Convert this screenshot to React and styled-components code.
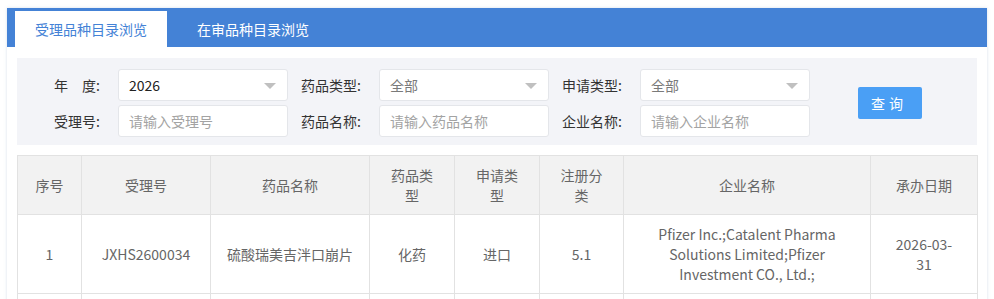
import React from "react";
import styled, { createGlobalStyle } from "styled-components";

const GlobalStyle = createGlobalStyle`
  body {
    margin: 0;
    background: #fff;
    font-family: "Microsoft YaHei", "Noto Sans CJK SC", sans-serif;
    font-size: 14px;
    color: #333;
  }
`;

const Page = styled.div`
  padding: 8px 7px;
`;

const Card = styled.div`
  width: 980px;
  background: #fff;
  box-shadow: 0 0 3px rgba(150, 170, 200, 0.35);
`;

const TabBar = styled.div`
  display: flex;
  align-items: flex-end;
  gap: 10px;
  height: 39px;
  padding-left: 8px;
  background: #4482d6;
`;

const Tab = styled.div`
  height: 36px;
  padding: 0 20px;
  display: flex;
  align-items: center;
  font-size: 14px;
  color: ${({ active }) => (active ? "#4482d6" : "#fff")};
  background: ${({ active }) => (active ? "#fff" : "transparent")};
  cursor: pointer;
`;

const Body = styled.div`
  padding: 11px 10px 0;
`;

const Filter = styled.div`
  display: flex;
  align-items: center;
  padding: 11px 10px 8px;
  background: #f3f4f8;
`;

const Fields = styled.div`
  display: grid;
  grid-template-columns: repeat(3, 91px 170px);
  row-gap: 4px;
`;

const Label = styled.label`
  display: flex;
  align-items: center;
  justify-content: flex-end;
  padding-right: 18px;
  color: #333;
  white-space: pre;
`;

const Input = styled.input`
  box-sizing: border-box;
  width: 170px;
  height: 32px;
  padding: 0 10px;
  border: 1px solid #e4e6ea;
  border-radius: 3px;
  background: #fff;
  font: inherit;
  color: #333;
  outline: none;

  &::placeholder {
    color: #a3a3a3;
  }
`;

const Select = styled.div`
  box-sizing: border-box;
  position: relative;
  width: 170px;
  height: 32px;
  padding: 0 10px;
  display: flex;
  align-items: center;
  border: 1px solid #e4e6ea;
  border-radius: 3px;
  background: #fff;
  color: ${({ muted }) => (muted ? "#7a7a7a" : "#222")};

  &::after {
    content: "";
    position: absolute;
    right: 11px;
    top: 13px;
    border-left: 6px solid transparent;
    border-right: 6px solid transparent;
    border-top: 6px solid #c0c0c0;
  }
`;

const Button = styled.button`
  margin-left: 48px;
  width: 64px;
  height: 32px;
  border: none;
  border-radius: 2px;
  background: #4a9ff5;
  color: #fff;
  font: inherit;
  font-size: 14px;
  letter-spacing: 4px;
  padding-left: 4px;
  cursor: pointer;
`;

const Table = styled.table`
  margin-top: 10px;
  width: 960px;
  border-collapse: collapse;
  table-layout: fixed;
  color: #666;
`;

const Th = styled.th`
  height: 59px;
  padding: 9px 15px;
  box-sizing: border-box;
  background: #f2f2f2;
  border: 1px solid #e2e2e2;
  font-weight: normal;
  line-height: 20px;
  text-align: center;
`;

const Td = styled.td`
  height: 79px;
  padding: 9px ${({ wide }) => (wide ? "20px" : "15px")};
  box-sizing: border-box;
  border: 1px solid #e2e2e2;
  line-height: 20px;
  text-align: center;
`;

const columns = [
  { title: "序号", width: 64 },
  { title: "受理号", width: 129 },
  { title: "药品名称", width: 159 },
  { title: "药品类型", width: 85 },
  { title: "申请类型", width: 85 },
  { title: "注册分类", width: 84 },
  { title: "企业名称", width: 247 },
  { title: "承办日期", width: 107 },
];

const rows = [
  [
    "1",
    "JXHS2600034",
    "硫酸瑞美吉泮口崩片",
    "化药",
    "进口",
    "5.1",
    "Pfizer Inc.;Catalent Pharma Solutions Limited;Pfizer Investment CO., Ltd.;",
    "2026-03-31",
  ],
  ["", "", "", "", "", "", "", ""],
];

const App = () => {
  return (
    <Page>
      <GlobalStyle />
      <Card>
        <TabBar>
          <Tab active>受理品种目录浏览</Tab>
          <Tab>在审品种目录浏览</Tab>
        </TabBar>
        <Body>
          <Filter>
            <Fields>
              <Label>年　度:</Label>
              <Select>2026</Select>
              <Label>药品类型:</Label>
              <Select muted>全部</Select>
              <Label>申请类型:</Label>
              <Select muted>全部</Select>
              <Label>受理号:</Label>
              <Input placeholder="请输入受理号" />
              <Label>药品名称:</Label>
              <Input placeholder="请输入药品名称" />
              <Label>企业名称:</Label>
              <Input placeholder="请输入企业名称" />
            </Fields>
            <Button>查询</Button>
          </Filter>
          <Table>
            <colgroup>
              {columns.map((c) => (
                <col key={c.title} style={{ width: c.width }} />
              ))}
            </colgroup>
            <thead>
              <tr>
                {columns.map((c) => (
                  <Th key={c.title}>{c.title}</Th>
                ))}
              </tr>
            </thead>
            <tbody>
              {rows.map((r, i) => (
                <tr key={i}>
                  {r.map((v, j) => (
                    <Td key={j} wide={j === 7 || j === 6}>
                      {v}
                    </Td>
                  ))}
                </tr>
              ))}
            </tbody>
          </Table>
        </Body>
      </Card>
    </Page>
  );
};

export default App;
